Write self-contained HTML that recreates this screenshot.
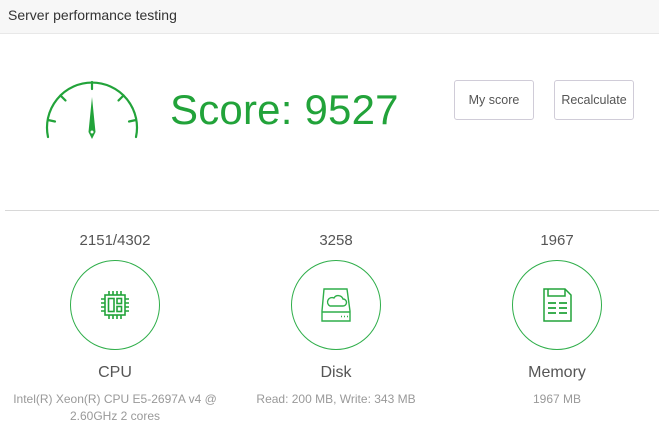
<!DOCTYPE html>
<html><head><style>
*{margin:0;padding:0;box-sizing:border-box}
body{width:659px;height:447px;background:#fff;font-family:"Liberation Sans",sans-serif;position:relative;overflow:hidden}
.hdr{position:absolute;left:0;top:0;width:659px;height:34px;background:#f7f7f7;border-bottom:1px solid #e8e8e8;font-size:14px;color:#333;padding:7px 0 0 8px}
.score{position:absolute;left:170px;top:86px;font-size:42px;color:#22a33a;letter-spacing:0.2px}
.btn{position:absolute;top:80px;width:80px;height:40px;border:1px solid #d0ccd8;border-radius:3px;font-size:12.5px;color:#555;text-align:center;line-height:38px}
.div{position:absolute;left:5px;top:210px;width:654px;border-top:1px solid #d8d8d8}
.col{position:absolute;top:232px;width:220px;text-align:center}
.num{font-size:15px;color:#555;height:20px}
.circ{width:90px;height:90px;border:1.5px solid #2fae4a;border-radius:50%;margin:8px auto 0;display:flex;align-items:center;justify-content:center}
.lbl{font-size:16px;color:#555;margin-top:14px}
.desc{font-size:12px;color:#999;margin-top:9px;line-height:17px}
</style></head><body>
<div class="hdr">Server performance testing</div>
<svg style="position:absolute;left:40px;top:75px" width="105" height="70" viewBox="40 75 105 70">
<g stroke="#22a33a" stroke-width="2.2" fill="none" stroke-linecap="round">
<path d="M48 137 A45 45 0 1 1 136 137"/>
<line x1="92" y1="82" x2="92" y2="89"/>
<line x1="60.5" y1="95.5" x2="65.5" y2="100.5"/>
<line x1="123.5" y1="95.5" x2="118.5" y2="100.5"/>
<line x1="48" y1="120" x2="55" y2="121.5"/>
<line x1="136" y1="120" x2="129" y2="121.5"/>
</g>
<path d="M92 97 L95.5 132 L92 139 L88.5 132 Z" fill="#22a33a"/>
<circle cx="92" cy="132" r="1.5" fill="#fff"/>
</svg>
<div class="score">Score: 9527</div>
<div class="btn" style="left:454px">My score</div>
<div class="btn" style="left:554px">Recalculate</div>
<div class="div"></div>
<div class="col" style="left:5px"><div class="num">2151/4302</div>
<div class="circ"><svg width="34" height="34" viewBox="0 0 34 34" fill="none" stroke="#22a33a" stroke-width="1.6">
<rect x="7" y="7" width="20" height="20"/><rect x="10.5" y="10.5" width="5.5" height="13"/><rect x="19" y="10.5" width="4.5" height="5"/><rect x="19" y="18.5" width="4.5" height="5"/>
<path d="M11 3v4M15 3v4M19 3v4M23 3v4M11 27v4M15 27v4M19 27v4M23 27v4M3 11h4M3 15h4M3 19h4M3 23h4M27 11h4M27 15h4M27 19h4M27 23h4"/></svg></div>
<div class="lbl">CPU</div><div class="desc">Intel(R) Xeon(R) CPU E5-2697A v4 @<br>2.60GHz 2 cores</div></div>
<div class="col" style="left:226px"><div class="num">3258</div>
<div class="circ"><svg width="34" height="36" viewBox="0 0 34 36" fill="none" stroke="#2fae4a" stroke-width="1.4">
<path d="M5 2h23l3 22v10H3V24z"/><path d="M3 25h28"/><path d="M11 19h13a3.5 3.5 0 0 0 0-7 5 5 0 0 0-9-1 4 4 0 0 0-4 8z"/><path d="M22 29.5h1M25 29.5h1M28 29.5h1"/></svg></div>
<div class="lbl">Disk</div><div class="desc">Read: 200 MB, Write: 343 MB</div></div>
<div class="col" style="left:447px"><div class="num">1967</div>
<div class="circ"><svg width="32" height="36" viewBox="0 0 32 36" fill="none" stroke="#22a33a" stroke-width="1.5">
<path d="M3 2h21l6 6v26H3z"/><path d="M7 2v7h17V2" /><path d="M7 16h8M18 16h8M7 21h8M18 21h8M7 26h8M18 26h8" stroke-width="1.8"/></svg></div>
<div class="lbl">Memory</div><div class="desc">1967 MB</div></div>
</body></html>
